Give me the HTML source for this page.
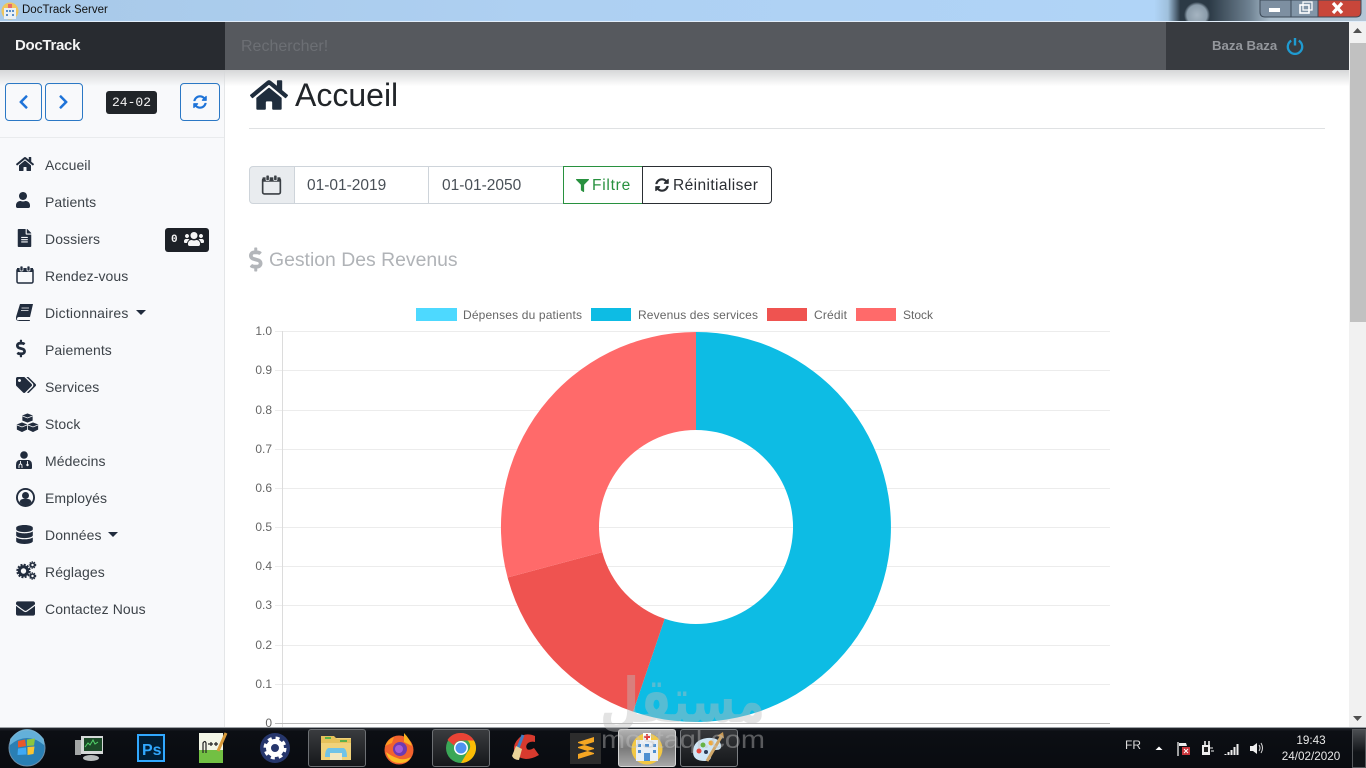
<!DOCTYPE html>
<html lang="fr"><head><meta charset="utf-8"><title>DocTrack Server</title>
<style>
*{box-sizing:border-box}
html,body{margin:0;padding:0;width:1366px;height:768px;overflow:hidden;background:#fff;font-family:"Liberation Sans",sans-serif}
.a{position:absolute}
.t{position:absolute;white-space:nowrap;height:20px;line-height:20px}
.m{position:absolute;left:45px;height:20px;line-height:20px;font-size:14px;color:#3d4349;white-space:nowrap;letter-spacing:.08px}
.i{position:absolute;fill:#212c3d}
.tb{position:absolute;top:729px;width:58px;height:38px;border:1px solid #6d7074;border-radius:3px;background:linear-gradient(#3a3c3f,#16181b)}
</style></head><body>

<!-- title bar -->
<div class="a" style="left:0;top:0;width:1366px;height:22px;background:radial-gradient(circle at 1197px 15px,#a5b4c1 0,#8b9caa 10px,rgba(139,156,170,0) 13px),radial-gradient(ellipse at 203px 0,#4a5a6a 0,rgba(74,90,106,0) 7px),radial-gradient(ellipse at 410px 16px,#8ba6c2 0,rgba(139,166,194,0) 12px),radial-gradient(ellipse at 602px 0,#4a5a6a 0,rgba(74,90,106,0) 7px),radial-gradient(ellipse at 790px 0,#4a5a6a 0,rgba(74,90,106,0) 7px),linear-gradient(90deg,#a8c9e8 0,#aed0f2 40%,#b0d4f7 84.5%,#9fc0dc 85.5%,#2c3a46 86.4%,#2c3a46 88.5%,#6f8292 91.5%,#a9bccb 93%,#b4c6d6 100%);border-bottom:1px solid #e2eefa"></div>
<svg class="a" style="left:1259px;top:0" width="107" height="18" viewBox="0 0 107 18">
<path d="M1 0v12q0 5 5 5h26V0z" fill="#7d8fa1" stroke="#3c4a58"/><path d="M32 0v17h27V0z" fill="#8296a8" stroke="#3c4a58"/>
<path d="M59 0v17h38q5 0 5-5V0z" fill="#c8463a" stroke="#3c4a58"/>
<rect x="10" y="8" width="11" height="4" fill="#fff"/>
<rect x="41" y="5" width="9" height="8" fill="none" stroke="#fff" stroke-width="1.6"/><rect x="44" y="2" width="9" height="8" fill="none" stroke="#fff" stroke-width="1.3"/>
<path d="M74 3l9 10M83 3l-9 10" stroke="#fff" stroke-width="3.2"/>
</svg>
<svg class="a" style="left:1px;top:2px" width="18" height="18" viewBox="0 0 18 18"><circle cx="9" cy="9" r="8.5" fill="#efc65e"/><rect x="3" y="6" width="12" height="11" fill="#e9f0f6"/><rect x="7" y="2" width="4" height="4" fill="#e86a6a"/><path d="M5 8h2v2H5zM8 8h2v2H8zM11 8h2v2h-2zM5 12h2v2H5zM11 12h2v2h-2z" fill="#5a8fc8"/></svg>
<div class="t" style="left:22px;top:0;font-size:11.5px;color:#111;">DocTrack Server</div>

<!-- sidebar -->
<div class="a" style="left:0;top:70px;width:225px;height:658px;background:#f8f9fb;border-right:1px solid #e4e6e8"></div>
<div class="a" style="left:0;top:137px;width:224px;height:1px;background:#e9ebed"></div>

<!-- shadow + navbar -->
<div class="a" style="left:0;top:70px;width:1349px;height:18px;background:linear-gradient(#d6d7d8,rgba(255,255,255,0) 90%)"></div>
<div class="a" style="left:0;top:22px;width:225px;height:48px;background:#282b30"></div>
<div class="a" style="left:225px;top:22px;width:941px;height:48px;background:#56595e"></div>
<div class="a" style="left:1166px;top:22px;width:183px;height:48px;background:#383b40"></div>
<div class="t" style="left:15px;top:36px;font-size:15px;font-weight:bold;color:#f4f4f4;letter-spacing:-.3px">DocTrack</div>
<div class="t" style="left:241px;top:37px;font-size:16px;color:#6c6f74">Rechercher!</div>
<div class="t" style="left:1212px;top:36px;font-size:13.2px;font-weight:bold;color:#94979c;">Baza Baza</div>
<svg class="a" style="left:1286px;top:37px" width="18" height="18" viewBox="0 0 18 18"><path d="M5.2 3.6a7.2 7.2 0 1 0 7.6 0" fill="none" stroke="#1f9bd1" stroke-width="2.3"/><path d="M9 1v7.5" stroke="#1f9bd1" stroke-width="2.4"/></svg>

<!-- sidebar top buttons -->
<div class="a" style="left:5px;top:83px;width:37px;height:38px;border:1px solid #2b78c5;border-radius:4px"></div>
<div class="a" style="left:45px;top:83px;width:38px;height:38px;border:1px solid #2b78c5;border-radius:4px"></div>
<div class="a" style="left:180px;top:83px;width:40px;height:38px;border:1px solid #2b78c5;border-radius:4px"></div>
<svg class="a" style="left:18px;top:94px;fill:#1e73d8" width="11" height="16" viewBox="0 0 320 512"><path d="M34.52 239.03L228.87 44.69c9.37-9.37 24.57-9.37 33.94 0l22.67 22.67c9.36 9.36 9.38 24.52.04 33.9L131.49 256l154.02 154.75c9.34 9.38 9.32 24.54-.04 33.9l-22.67 22.67c-9.37 9.37-24.57 9.37-33.94 0L34.52 272.97c-9.37-9.37-9.37-24.57 0-33.94z"/></svg>
<svg class="a" style="left:58px;top:94px;fill:#1e73d8" width="11" height="16" viewBox="0 0 320 512"><path d="M285.476 272.971L91.132 467.314c-9.373 9.373-24.569 9.373-33.941 0l-22.667-22.667c-9.357-9.357-9.375-24.522-.04-33.901L188.505 256 34.484 101.255c-9.335-9.379-9.317-24.544.04-33.901l22.667-22.667c9.373-9.373 24.569-9.373 33.941 0L285.475 239.03c9.373 9.372 9.373 24.568.001 33.941z"/></svg>
<svg class="a" style="left:193px;top:95px;fill:#1e73d8" width="14" height="14" viewBox="0 0 512 512"><path d="M370.72 133.28C339.458 104.008 298.888 87.962 255.848 88c-77.458.068-144.328 53.178-162.791 126.85-1.344 5.363-6.122 9.15-11.651 9.15H24.103c-7.498 0-13.194-6.807-11.807-14.176C33.933 94.924 134.813 8 256 8c66.448 0 126.791 26.136 171.315 68.685L463.03 40.97C478.149 25.851 504 36.559 504 57.941V192c0 13.255-10.745 24-24 24H345.941c-21.382 0-32.09-25.851-16.971-40.971l41.75-41.749zM32 296h134.059c21.382 0 32.09 25.851 16.971 40.971l-41.75 41.75c31.262 29.273 71.835 45.319 114.876 45.28 77.418-.07 144.315-53.144 162.787-126.849 1.344-5.363 6.122-9.15 11.651-9.15h57.304c7.498 0 13.194 6.807 11.807 14.176C478.067 417.076 377.187 504 256 504c-66.448 0-126.791-26.136-171.315-68.685L48.97 471.03C33.851 486.149 8 475.441 8 454.059V320c0-13.255 10.745-24 24-24z"/></svg>
<div class="t" style="left:106px;top:91px;width:51px;height:23px;background:#212529;color:#f5f5f5;border-radius:3px;text-align:center;font:13px/23px 'Liberation Mono',monospace">24-02</div>

<!-- menu -->
<svg class="i" style="left:16px;top:156px" width="18" height="16" viewBox="0 0 576 512"><path d="M280.37 148.26L96 300.11V464a16 16 0 0 0 16 16l112.06-.29a16 16 0 0 0 15.92-16V368a16 16 0 0 1 16-16h64a16 16 0 0 1 16 16v95.64a16 16 0 0 0 16 16.05L464 480a16 16 0 0 0 16-16V300L295.67 148.26a12.19 12.19 0 0 0-15.3 0zM571.6 251.47L488 182.56V44.05a12 12 0 0 0-12-12h-56a12 12 0 0 0-12 12v72.61L318.47 43a48 48 0 0 0-61 0L4.34 251.47a12 12 0 0 0-1.6 16.9l25.5 31A12 12 0 0 0 45.15 301l235.22-193.74a12.19 12.19 0 0 1 15.3 0L530.9 301a12 12 0 0 0 16.9-1.6l25.5-31a12 12 0 0 0-1.7-16.93z"/></svg>
<div class="m" style="top:155px">Accueil</div>
<svg class="i" style="left:16px;top:192px" width="14" height="16" viewBox="0 0 448 512"><path d="M224 256c70.7 0 128-57.3 128-128S294.7 0 224 0 96 57.3 96 128s57.3 128 128 128zm89.6 32h-16.7c-22.2 10.2-46.9 16-72.9 16s-50.6-5.8-72.9-16h-16.7C60.2 288 0 348.2 0 422.4V464c0 26.5 21.5 48 48 48h352c26.5 0 48-21.5 48-48v-41.6c0-74.2-60.2-134.4-134.4-134.4z"/></svg>
<div class="m" style="top:192px">Patients</div>
<svg class="i" style="left:16px;top:229px" width="17" height="18" viewBox="0 0 384 512"><path d="M224 136V0H24C10.7 0 0 10.7 0 24v464c0 13.3 10.7 24 24 24h336c13.3 0 24-10.7 24-24V160H248c-13.2 0-24-10.8-24-24zm64 236c0 6.6-5.4 12-12 12H108c-6.6 0-12-5.4-12-12v-8c0-6.6 5.4-12 12-12h168c6.6 0 12 5.4 12 12v8zm0-64c0 6.6-5.4 12-12 12H108c-6.6 0-12-5.4-12-12v-8c0-6.6 5.4-12 12-12h168c6.6 0 12 5.4 12 12v8zm0-72v8c0 6.6-5.4 12-12 12H108c-6.6 0-12-5.4-12-12v-8c0-6.6 5.4-12 12-12h168c6.6 0 12 5.4 12 12zm96-114.1v6.1H256V0h6.1c6.4 0 12.5 2.5 17 7l97.9 98c4.5 4.5 7 10.6 7 16.9z"/></svg>
<div class="m" style="top:229px">Dossiers</div>
<div class="a" style="left:165px;top:228px;width:44px;height:24px;background:#1d2127;border-radius:3px"></div>
<div class="t" style="left:171px;top:230px;font:bold 11px/20px 'Liberation Mono',monospace;color:#f5f5f5">0</div>
<svg class="a" style="left:184px;top:231px;fill:#f5f5f5" width="20" height="16" viewBox="0 0 640 512"><path d="M96 224c35.3 0 64-28.7 64-64s-28.7-64-64-64-64 28.7-64 64 28.7 64 64 64zm448 0c35.3 0 64-28.7 64-64s-28.7-64-64-64-64 28.7-64 64 28.7 64 64 64zm32 32h-64c-17.6 0-33.5 7.1-45.1 18.6 40.3 22.1 68.9 62 75.1 109.4h66c17.7 0 32-14.3 32-32v-32c0-35.3-28.7-64-64-64zm-256 0c61.9 0 112-50.1 112-112S381.9 32 320 32 208 82.1 208 144s50.1 112 112 112zm76.8 32h-8.3c-20.8 10-43.9 16-68.5 16s-47.6-6-68.5-16h-8.3C179.6 288 128 339.6 128 403.2V432c0 26.5 21.5 48 48 48h288c26.5 0 48-21.5 48-48v-28.8c0-63.6-51.6-115.2-115.2-115.2zm-223.7-13.4C161.5 263.1 145.6 256 128 256H64c-35.3 0-64 28.7-64 64v32c0 17.7 14.3 32 32 32h65.9c6.3-47.4 34.9-87.3 75.2-109.4z"/></svg>
<svg class="a" style="left:16px;top:265px" width="18" height="19" viewBox="0 0 18 19"><rect x="1" y="4" width="16" height="14" rx="1.5" fill="none" stroke="#212c3d" stroke-width="1.5"/><rect x="1" y="3" width="16" height="4" fill="#212c3d"/><rect x="4" y="1" width="3" height="5" rx="1" fill="#212c3d" stroke="#f8f9fb" stroke-width=".7"/><rect x="11" y="1" width="3" height="5" rx="1" fill="#212c3d" stroke="#f8f9fb" stroke-width=".7"/></svg>
<div class="m" style="top:266px">Rendez-vous</div>
<svg class="a" style="left:16px;top:303px" width="18" height="18" viewBox="0 0 18 18"><path d="M4 1h13l-3 13H3q-2 0-2 2t2 1h11l-.3 1H3q-3 0-3-3 0-1 .3-2z" fill="#212c3d"/><path d="M5.5 5h7.5M5 7.5h7.5" stroke="#f8f9fb" stroke-width=".8"/></svg>
<div class="m" style="top:303px;letter-spacing:.2px">Dictionnaires</div>
<svg class="a" style="left:136px;top:310px" width="10" height="6"><path d="M0 0h10L5 5z" fill="#212c3d"/></svg>
<svg class="i" style="left:16px;top:339px" width="11" height="19" viewBox="0 0 320 512"><path d="M209.2 233.4l-108-31.6C88.7 198.2 80 186.5 80 173.5c0-16.3 13.2-29.5 29.5-29.5h66.3c12.2 0 24.2 3.7 34.2 10.5 6.1 4.1 14.3 3.1 19.5-2l34.8-34c7.1-6.9 6.1-18.4-1.8-24.5C238 74.8 207.4 64.1 176 64V16c0-8.8-7.2-16-16-16h-32c-8.8 0-16 7.2-16 16v48h-2.5C45.8 64-5.4 118.7.5 183.6c4.2 46.1 39.4 83.6 83.8 96.6l102.5 30c12.5 3.7 21.2 15.3 21.2 28.3 0 16.3-13.2 29.5-29.5 29.5h-66.3C100 368 88 364.3 78 357.5c-6.1-4.1-14.3-3.1-19.5 2l-34.8 34c-7.1 6.9-6.1 18.4 1.8 24.5 24.5 19.2 55.1 29.9 86.5 30v48c0 8.8 7.2 16 16 16h32c8.8 0 16-7.2 16-16v-48.2c46.6-.9 90.3-28.6 105.7-72.7 21.5-61.6-14.6-124.8-72.5-141.7z"/></svg>
<div class="m" style="top:340px">Paiements</div>
<svg class="i" style="left:16px;top:377px" width="20" height="16" viewBox="0 0 640 512"><path d="M497.941 225.941L286.059 14.059A48 48 0 0 0 252.118 0H48C21.49 0 0 21.49 0 48v204.118a48 48 0 0 0 14.059 33.941l211.882 211.882c18.744 18.745 49.136 18.746 67.882 0l204.118-204.118c18.745-18.745 18.745-49.137 0-67.882zM112 160c-26.51 0-48-21.49-48-48s21.49-48 48-48 48 21.49 48 48-21.49 48-48 48zm513.941 133.823L421.823 497.941c-18.745 18.745-49.137 18.745-67.882 0l-.36-.36L527.64 323.522c16.999-16.999 26.36-39.6 26.36-63.64s-9.362-46.641-26.36-63.64L331.397 0h48.721a48 48 0 0 1 33.941 14.059l211.882 211.882c18.745 18.745 18.745 49.137 0 67.882z"/></svg>
<div class="m" style="top:377px">Services</div>
<svg class="a" style="left:16px;top:413px" width="23" height="20" viewBox="0 0 23 20"><g fill="#212c3d" stroke="#f8f9fb" stroke-width=".7"><path d="M11.5 0l5.5 2.2v5.6L11.5 10 6 7.8V2.2z"/><path d="M6 9l5.5 2.2v5.6L6 19.5.5 16.8v-5.6z"/><path d="M17 9l5.5 2.2v5.6L17 19.5l-5.5-2.7v-5.6z"/></g><path d="M6.500 3l5 2 5-2M1 12l5 2 5-2M12 12l5 2 5-2" fill="none" stroke="#f8f9fb" stroke-width=".8"/></svg>
<div class="m" style="top:414px">Stock</div>
<svg class="a" style="left:16px;top:451px" width="16" height="18" viewBox="0 0 16 18"><circle cx="8" cy="4" r="3.8" fill="#212c3d"/><path d="M3 9h10q3 1 3 5v3a1 1 0 0 1-1 1H1a1 1 0 0 1-1-1v-3q0-4 3-5z" fill="#212c3d"/><circle cx="11.5" cy="14" r="1.2" fill="#f8f9fb"/><path d="M4.500 10v3M3 17v-2q0-2 1.500-2T6 15v2M11.500 10v3" stroke="#f8f9fb" stroke-width=".9" fill="none"/></svg>
<div class="m" style="top:451px">Médecins</div>
<svg class="a" style="left:16px;top:488px" width="19" height="19" viewBox="0 0 19 19"><circle cx="9.500" cy="9.500" r="9.500" fill="#212c3d"/><circle cx="9.500" cy="9.500" r="7.600" fill="#f8f9fb"/><circle cx="9.500" cy="7.500" r="3.500" fill="#212c3d"/><path d="M3.500 14q1-3 3.500-3h5q2.500 0 3.500 3-2.500 3.500-6 3.500T3.500 14z" fill="#212c3d"/></svg>
<div class="m" style="top:488px">Employés</div>
<svg class="i" style="left:16px;top:525px" width="17" height="19" viewBox="0 0 448 512"><path d="M448 73.143v45.714C448 159.143 347.667 192 224 192S0 159.143 0 118.857V73.143C0 32.857 100.333 0 224 0s224 32.857 224 73.143zM448 176v102.857C448 319.143 347.667 352 224 352S0 319.143 0 278.857V176c48.125 33.143 136.208 48.572 224 48.572S399.874 209.143 448 176zm0 160v102.857C448 479.143 347.667 512 224 512S0 479.143 0 438.857V336c48.125 33.143 136.208 48.572 224 48.572S399.874 369.143 448 336z"/></svg>
<div class="m" style="top:525px">Données</div>
<svg class="a" style="left:108px;top:532px" width="10" height="6"><path d="M0 0h10L5 5z" fill="#212c3d"/></svg>
<svg class="a" style="left:16px;top:561px" width="21" height="19" viewBox="0 0 21 19"><g fill="none" stroke="#212c3d"><circle cx="7.500" cy="10" r="4.200" stroke-width="3"/><circle cx="7.500" cy="10" r="6.300" stroke-width="1.800" stroke-dasharray="2 1.300"/><circle cx="16.500" cy="4" r="2" stroke-width="1.600"/><circle cx="16.500" cy="4" r="3.200" stroke-width="1.100" stroke-dasharray="1.300 1"/><circle cx="16.500" cy="15" r="2" stroke-width="1.600"/><circle cx="16.500" cy="15" r="3.200" stroke-width="1.100" stroke-dasharray="1.300 1"/></g></svg>
<div class="m" style="top:562px">Réglages</div>
<svg class="i" style="left:16px;top:599px" width="19" height="19" viewBox="0 0 512 512"><path d="M502.3 190.8c3.9-3.1 9.7-.2 9.7 4.7V400c0 26.5-21.5 48-48 48H48c-26.5 0-48-21.5-48-48V195.6c0-5 5.7-7.8 9.7-4.7 22.4 17.4 52.1 39.5 154.1 113.6 21.1 15.4 56.7 47.8 92.2 47.6 35.7.3 72-32.8 92.3-47.6 102-74.1 131.6-96.3 154-113.7zM256 320c23.2.4 56.6-29.2 73.4-41.4 132.7-96.3 142.8-104.7 173.4-128.7 5.8-4.5 9.2-11.5 9.2-18.9v-19c0-26.5-21.500-48-48-48H48C21.500 64 0 85.500 0 112v19c0 7.400 3.400 14.300 9.200 18.900 30.600 23.900 40.700 32.400 173.400 128.700 16.800 12.200 50.200 41.800 73.400 41.400z"/></svg>
<div class="m" style="top:599px">Contactez Nous</div>

<!-- page heading -->
<svg class="a" style="left:250px;top:78px;fill:#1f2d3d" width="38" height="34" viewBox="0 0 576 512"><path d="M280.37 148.26L96 300.11V464a16 16 0 0 0 16 16l112.06-.29a16 16 0 0 0 15.92-16V368a16 16 0 0 1 16-16h64a16 16 0 0 1 16 16v95.64a16 16 0 0 0 16 16.05L464 480a16 16 0 0 0 16-16V300L295.67 148.26a12.19 12.19 0 0 0-15.3 0zM571.6 251.47L488 182.56V44.05a12 12 0 0 0-12-12h-56a12 12 0 0 0-12 12v72.61L318.47 43a48 48 0 0 0-61 0L4.34 251.47a12 12 0 0 0-1.6 16.9l25.5 31A12 12 0 0 0 45.15 301l235.22-193.74a12.19 12.19 0 0 1 15.3 0L530.9 301a12 12 0 0 0 16.9-1.6l25.5-31a12 12 0 0 0-1.7-16.93z"/></svg>
<div class="t" style="left:295px;top:75px;height:40px;line-height:40px;font-size:32px;color:#212529">Accueil</div>
<div class="a" style="left:249px;top:128px;width:1076px;height:1px;background:#dfe1e3"></div>

<!-- filter -->
<div class="a" style="left:249px;top:166px;width:46px;height:38px;background:#e9ecef;border:1px solid #ced4da;border-radius:4px 0 0 4px"></div>
<svg class="a" style="left:261px;top:174px" width="21" height="21" viewBox="0 0 18 19"><rect x="1" y="4" width="16" height="14" rx="1.500" fill="none" stroke="#3a3f44" stroke-width="1.500"/><rect x="1" y="3" width="16" height="4" fill="#3a3f44"/><rect x="4" y="1" width="3" height="5" rx="1" fill="#3a3f44" stroke="#e9ecef" stroke-width=".7"/><rect x="11" y="1" width="3" height="5" rx="1" fill="#3a3f44" stroke="#e9ecef" stroke-width=".7"/></svg>
<div class="a" style="left:294px;top:166px;width:135px;height:38px;border:1px solid #ced4da;border-left:0"></div>
<div class="a" style="left:428px;top:166px;width:136px;height:38px;border:1px solid #ced4da"></div>
<div class="t" style="left:307px;top:175.5px;font-size:15.5px;color:#495057">01-01-2019</div>
<div class="t" style="left:442px;top:175.5px;font-size:15.5px;color:#495057">01-01-2050</div>
<div class="a" style="left:563px;top:166px;width:80px;height:38px;border:1px solid #28913f"></div>
<svg class="a" style="left:576px;top:179px;fill:#28913f" width="13" height="13" viewBox="0 0 512 512"><path d="M487.976 0H24.028C2.71 0-8.047 25.866 7.058 40.971L192 225.941V432c0 7.831 3.821 15.17 10.237 19.662l80 55.98C298.02 518.69 320 507.493 320 487.98V225.941l184.947-184.97C520.021 25.896 509.338 0 487.976 0z"/></svg>
<div class="t" style="left:592px;top:175.5px;font-size:15.5px;color:#28913f;letter-spacing:.75px">Filtre</div>
<div class="a" style="left:642px;top:166px;width:130px;height:38px;border:1px solid #2a2e33;border-radius:0 4px 4px 0"></div>
<svg class="a" style="left:655px;top:178px;fill:#2a2e33" width="14" height="14" viewBox="0 0 512 512"><path d="M370.72 133.28C339.458 104.008 298.888 87.962 255.848 88c-77.458.068-144.328 53.178-162.791 126.85-1.344 5.363-6.122 9.15-11.651 9.15H24.103c-7.498 0-13.194-6.807-11.807-14.176C33.933 94.924 134.813 8 256 8c66.448 0 126.791 26.136 171.315 68.685L463.03 40.97C478.149 25.851 504 36.559 504 57.941V192c0 13.255-10.745 24-24 24H345.941c-21.382 0-32.09-25.851-16.971-40.971l41.75-41.749zM32 296h134.059c21.382 0 32.09 25.851 16.971 40.971l-41.75 41.75c31.262 29.273 71.835 45.319 114.876 45.28 77.418-.07 144.315-53.144 162.787-126.849 1.344-5.363 6.122-9.15 11.651-9.15h57.304c7.498 0 13.194 6.807 11.807 14.176C478.067 417.076 377.187 504 256 504c-66.448 0-126.791-26.136-171.315-68.685L48.97 471.03C33.851 486.149 8 475.441 8 454.059V320c0-13.255 10.745-24 24-24z"/></svg>
<div class="t" style="left:673px;top:175.5px;font-size:15.5px;color:#2a2e33;letter-spacing:.4px">Réinitialiser</div>

<!-- section heading -->
<svg class="a" style="left:249px;top:246px;fill:#b3b6ba" width="15" height="27" viewBox="0 0 320 512"><path d="M209.2 233.4l-108-31.6C88.7 198.2 80 186.5 80 173.5c0-16.3 13.2-29.5 29.5-29.5h66.3c12.2 0 24.2 3.7 34.2 10.5 6.1 4.1 14.3 3.1 19.5-2l34.8-34c7.1-6.9 6.1-18.4-1.8-24.5C238 74.8 207.4 64.1 176 64V16c0-8.8-7.2-16-16-16h-32c-8.8 0-16 7.2-16 16v48h-2.5C45.8 64-5.4 118.7.5 183.6c4.2 46.1 39.4 83.6 83.8 96.6l102.5 30c12.5 3.7 21.2 15.3 21.2 28.3 0 16.3-13.2 29.5-29.5 29.5h-66.3C100 368 88 364.3 78 357.5c-6.1-4.1-14.3-3.1-19.5 2l-34.8 34c-7.1 6.9-6.1 18.4 1.8 24.5 24.5 19.2 55.1 29.9 86.5 30v48c0 8.8 7.2 16 16 16h32c8.8 0 16-7.2 16-16v-48.2c46.6-.9 90.3-28.6 105.7-72.7 21.5-61.6-14.6-124.8-72.5-141.7z"/></svg>
<div class="t" style="left:269px;top:250px;font-size:19.4px;color:#b0b3b7;">Gestion Des Revenus</div>

<!-- chart -->
<svg class="a" style="left:225px;top:300px" width="1124" height="428" viewBox="225 300 1124 428" font-family="Liberation Sans, sans-serif">
<g stroke="#ececec" stroke-width="1">
<path d="M275 331.500H1110M275 370.500H1110M275 410.500H1110M275 449.500H1110M275 488.500H1110M275 527.500H1110M275 566.500H1110M275 605.500H1110M275 645.500H1110M275 684.500H1110"/>
</g>
<path d="M282.500 331V728" stroke="#dcdcdc"/>
<path d="M275 723.500H1110" stroke="#b9b9b9"/>
<g font-size="12" fill="#666" text-anchor="end">
<text x="272" y="335">1.0</text><text x="272" y="374">0.9</text><text x="272" y="414">0.8</text><text x="272" y="453">0.7</text><text x="272" y="492">0.6</text><text x="272" y="531">0.5</text><text x="272" y="570">0.4</text><text x="272" y="609">0.3</text><text x="272" y="649">0.2</text><text x="272" y="688">0.1</text><text x="272" y="727">0</text>
</g>
<rect x="416" y="308" width="41" height="13" fill="#4dd9ff"/>
<text x="463" y="319" font-size="12" fill="#666" textLength="119">Dépenses du patients</text>
<rect x="591" y="308" width="40" height="13" fill="#0dbce4"/>
<text x="638" y="319" font-size="12" fill="#666" textLength="120">Revenus des services</text>
<rect x="767" y="308" width="40" height="13" fill="#ef5350"/>
<text x="814" y="319" font-size="12" fill="#666" textLength="33">Crédit</text>
<rect x="856" y="308" width="40" height="13" fill="#ff6a6a"/>
<text x="903" y="319" font-size="12" fill="#666">Stock</text>
<!-- donut -->
<path d="M696 332A195 195 0 1 1 633.100 711.600L664.700 618.800A97 97 0 1 0 696 430Z" fill="#0dbce4"/>
<path d="M633.100 711.600A195 195 0 0 1 507.600 577.500L602.300 552.100A97 97 0 0 0 664.700 618.800Z" fill="#ef5350"/>
<path d="M507.600 577.500A195 195 0 0 1 696 332V430A97 97 0 0 0 602.300 552.100Z" fill="#ff6a6a"/>
</svg>

<!-- scrollbar -->
<div class="a" style="left:1349px;top:22px;width:17px;height:706px;background:#f1f1f1"></div>
<div class="a" style="left:1350px;top:43px;width:16px;height:279px;background:#c1c1c1"></div>
<svg class="a" style="left:1353px;top:28px" width="9" height="6"><path d="M0 5h9L4.500 0z" fill="#505050"/></svg>
<svg class="a" style="left:1353px;top:716px" width="9" height="6"><path d="M0 0h9L4.500 5z" fill="#505050"/></svg>

<!-- taskbar -->
<div class="a" style="left:0;top:727px;width:1366px;height:1px;background:#9ea2a6"></div>
<div class="a" style="left:0;top:728px;width:1366px;height:40px;background:linear-gradient(#24282e 0,#0c0f14 8%,#090b10 100%)"></div>
<div class="tb" style="left:308px"></div><div class="tb" style="left:432px"></div>
<div class="tb" style="left:618px;background:linear-gradient(#b2b2b2,#7a7a7a 50%,#a8a8a8);border-color:#d5d5d5"></div>
<div class="tb" style="left:680px;background:linear-gradient(#36383b,#15171a);border-color:#7b7e82"></div>
<div class="a" style="left:1352px;top:729px;width:14px;height:39px;border:1px solid #55585c;background:linear-gradient(#4a4d51,#111418 60%)"></div>

<svg class="a" style="left:0;top:728px" width="760" height="40" viewBox="0 728 760 40">
<!-- start orb -->
<circle cx="27" cy="748" r="18" fill="#2a7fb4"/><circle cx="27" cy="748" r="18" fill="none" stroke="#6d8ea8" stroke-width="1"/>
<path d="M10 745q17-14 34 0v-6q-8-10-17-10t-17 10z" fill="#7cc5e8" opacity=".7"/>
<path d="M18 741l7-1.500 1 6.500-8 1.500z" fill="#e8582c"/><path d="M27 739.500l8-1-1 7-7 .5z" fill="#8cc63f"/>
<path d="M18 748.500l8-1 .5 7-9 .5z" fill="#3fa9f5"/><path d="M27.500 747l7-.5-1 7.500-6 1z" fill="#fbc531"/>
<!-- monitor -->
<rect x="81" y="736" width="22" height="18" fill="#d5d8d8"/><rect x="84" y="738" width="18" height="13" fill="#1c4a28"/>
<path d="M85 747l3-4 2 2 3-5 2 4 3-2" stroke="#53d36a" fill="none"/><rect x="75" y="740" width="6" height="15" fill="#a3a6a6"/><ellipse cx="91" cy="758" rx="8" ry="3" fill="#b8bcbc"/>
<!-- Ps -->
<rect x="138" y="735" width="26" height="26" fill="#001e36" stroke="#31a8ff" stroke-width="2"/>
<text x="142" y="755" font-size="16" font-weight="bold" fill="#31a8ff" font-family="Liberation Sans,sans-serif">Ps</text>
<!-- notepad++ -->
<rect x="199" y="733" width="24" height="30" fill="#f3f6e6"/><rect x="199" y="750" width="24" height="13" fill="#72c043"/>
<path d="M203 753v-10q2-3 3 0v10M208 744h5M211 742v4M214 744h4M216 742v4" stroke="#222" fill="none" stroke-width="1.200"/>
<path d="M226 733l-8 18" stroke="#d99a3a" stroke-width="3"/>
<!-- gear -->
<circle cx="275" cy="748" r="15" fill="#26366c"/><circle cx="275" cy="748" r="6.500" fill="none" stroke="#fff" stroke-width="5"/><circle cx="275" cy="748" r="10" fill="none" stroke="#fff" stroke-width="3" stroke-dasharray="4 3.900"/>
<!-- explorer -->
<path d="M321 738h30v22h-30z" fill="#f0d27a"/><path d="M321 736h13l3 3h14v4h-30z" fill="#e6c15a"/><rect x="325" y="737" width="6" height="2" fill="#5bb04a"/><rect x="340" y="740" width="7" height="2" fill="#5bb04a"/>
<path d="M325 757q0-7 3-9h16q3 2 3 9z" fill="#6fc3e8"/><rect x="330" y="753" width="12" height="7" fill="#f2e7c0"/>
<!-- firefox -->
<circle cx="399" cy="750" r="14.500" fill="#f2622e"/><path d="M404 733q6 6 8 13l-8-4z" fill="#fbb01e"/><path d="M385 746q3-7 9-9l-2 6z" fill="#ff9a1f"/>
<circle cx="400" cy="749" r="7" fill="#6e3bb0"/><circle cx="399" cy="749" r="4" fill="#a25cd8"/><path d="M386 752q3 11 14 11 8 0 11-6-8 4-14 1-6-2-11-6z" fill="#fbbd24"/>
<!-- chrome -->
<circle cx="461" cy="748" r="15" fill="#3aa757"/><path d="M461 733a15 15 0 0 1 13 7.500h-13a7.500 7.500 0 0 0-7 5l-6.500-5.500A15 15 0 0 1 461 733z" fill="#ea4335"/><path d="M474 740.500a15 15 0 0 1-13 22.500l6.500-11a7.500 7.500 0 0 0 0-11.500z" fill="#fbbc05"/>
<circle cx="461" cy="748" r="7" fill="#fff"/><circle cx="461" cy="748" r="5.500" fill="#4e92f0"/>
<!-- ccleaner -->
<path d="M535 736q-10-4-16 2t-5 12q2 8 12 9 6 0 13-4l-5-7q-5 3-7 1-2-3 1-6 3-2 7-1z" fill="#d73a2e"/><path d="M523 735l-5 13" stroke="#3f7ec4" stroke-width="3"/><path d="M512 756l4-10 6 3-3 11q-5 0-7-4z" fill="#e9d49a"/>
<!-- sublime -->
<rect x="570" y="733" width="31" height="31" fill="#2c2c2c"/><path d="M578 742l16-5v5l-16 5zM578 748l16 5v-5l-16-5zM578 754l16-5v5l-16 5z" fill="#f5a623"/>
<!-- hospital -->
<circle cx="647" cy="749" r="15.500" fill="#f3c844"/><rect x="636" y="740" width="22" height="21" fill="#e9eff6"/><rect x="643" y="733" width="8" height="8" fill="#fff"/><path d="M647 734v6M644 737h6" stroke="#e23b3b" stroke-width="2"/>
<path d="M638 744h3v3h-3zM645 744h4v3h-4zM653 744h3v3h-3zM638 750h3v3h-3zM653 750h3v3h-3z" fill="#4f8fd0"/><rect x="644" y="753" width="6" height="8" fill="#4f8fd0"/>
<!-- palette -->
<path d="M693 752q0-12 14-14 12-1 14 7 1 5-5 5-6 0-5 5 1 6-6 6-12 0-12-9z" fill="#cfe6f5"/><circle cx="699" cy="751" r="2.500" fill="#e8483e"/><circle cx="703" cy="745" r="2.500" fill="#67b346"/><circle cx="711" cy="743" r="2.500" fill="#f0a93a"/><circle cx="706" cy="752" r="2" fill="#2b3b55"/>
<path d="M707 761l14-24" stroke="#d1a869" stroke-width="3"/><path d="M717 736l6-4 1 6z" fill="#c99a56"/>
</svg>

<!-- tray -->
<div class="t" style="left:1125px;top:735px;font-size:12px;color:#dcdcdc">FR</div>
<svg class="a" style="left:1155px;top:735px" width="160" height="26" viewBox="1155 735 160 26">
<path d="M1155.500 750h7l-3.500-3.500z" fill="#fff"/>
<path d="M1178 742v14" stroke="#eee" stroke-width="1.300"/><path d="M1179 743h7l1 3h-8z" fill="#eee"/><rect x="1182" y="747" width="8" height="8" fill="#c9363c"/><path d="M1184 749l4 4m0-4l-4 4" stroke="#fff"/>
<path d="M1202 745h8v10h-8z" fill="#eee"/><path d="M1205 741v4M1209 741v4" stroke="#eee" stroke-width="1.600"/><path d="M1210 748h3M1211 751h3" stroke="#eee"/><rect x="1204" y="747" width="4" height="5" fill="#222"/>
<path d="M1225.500 754v1M1228.500 752v3M1231.500 750v5M1234.500 747v8M1237.500 744v11" stroke="#eee" stroke-width="2"/>
<path d="M1250 746h3l4-3v11l-4-3h-3z" fill="#eee"/><path d="M1259 745q2 3 0 6M1261 743q3 5 0 10" stroke="#ddd" fill="none"/>
</svg>
<div class="t" style="left:1281px;top:731px;width:60px;text-align:center;font-size:11.7px;color:#e8e8e8">19:43</div>
<div class="t" style="left:1281px;top:747px;width:60px;text-align:center;font-size:11.7px;color:#e8e8e8">24/02/2020</div>

<!-- watermark -->
<svg class="a" style="left:590px;top:670px" width="190" height="90" viewBox="0 0 190 90" opacity=".42">
<text x="10" y="52" font-size="62" font-weight="bold" fill="#bdbdbd" textLength="165" lengthAdjust="spacingAndGlyphs" font-family="DejaVu Sans,sans-serif">مستقل</text>
<text x="11" y="78" font-size="25" fill="#c4c4c4" textLength="164" lengthAdjust="spacingAndGlyphs" font-family="Liberation Sans,sans-serif">mostaql.com</text>
</svg>
</body></html>
